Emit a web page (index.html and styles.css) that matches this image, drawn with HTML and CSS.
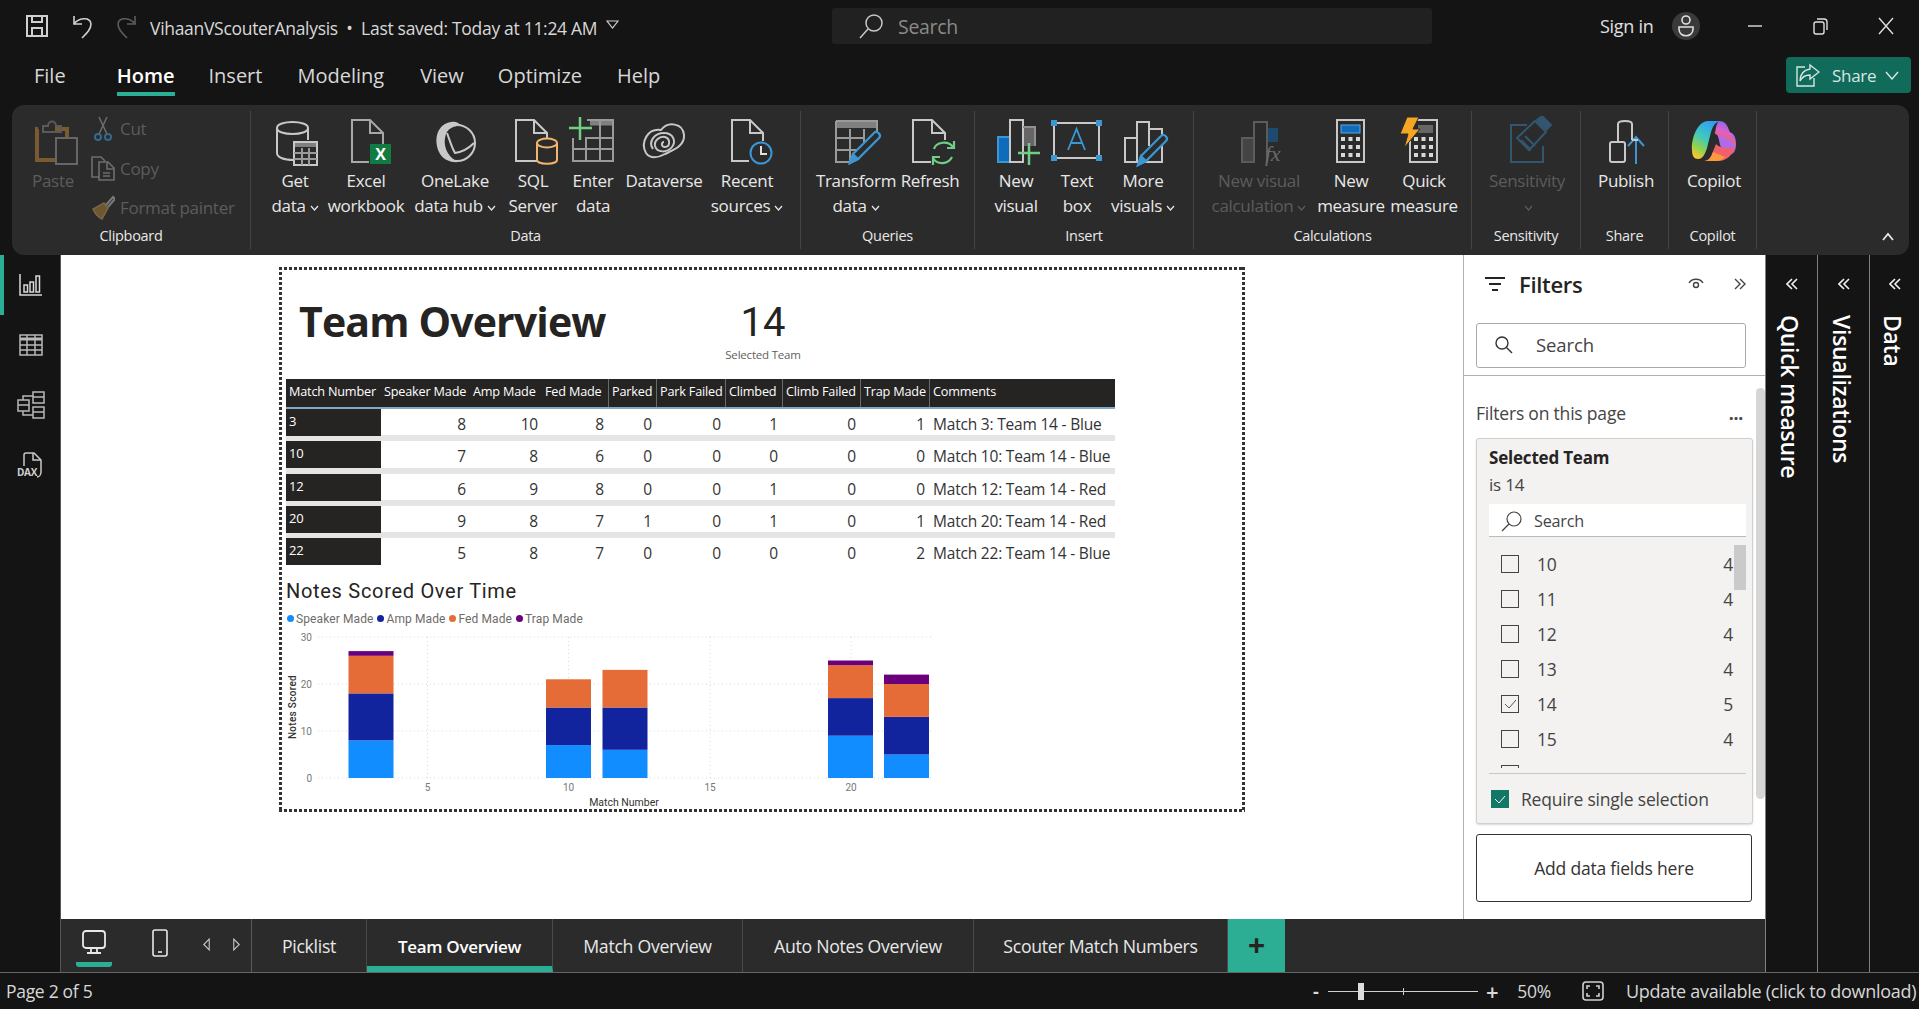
FILE: index.html
```html
<!DOCTYPE html>
<html lang="en">
<head>
    <meta charset="UTF-8">
    <title>VihaanVScouterAnalysis</title>
    <link rel="stylesheet" href="styles.css">
</head>
<body>
<svg class="svg-defs" width="0" height="0">
    <defs>
        <linearGradient id="cop-a" x1="0.7" y1="0" x2="0.2" y2="1">
            <stop offset="0" stop-color="#2f9df4"/><stop offset="0.45" stop-color="#3fc7c0"/><stop offset="0.75" stop-color="#8fd14f"/><stop offset="1" stop-color="#ffc72c"/>
        </linearGradient>
        <linearGradient id="cop-b" x1="0.6" y1="0" x2="0.3" y2="1">
            <stop offset="0" stop-color="#7a6cf0"/><stop offset="0.45" stop-color="#e060c8"/><stop offset="0.8" stop-color="#f8605a"/><stop offset="1" stop-color="#ff9a3c"/>
        </linearGradient>
    </defs>
</svg>

<header class="titlebar">
    <div class="quick-tools">
        <svg width="24" height="24" viewBox="0 0 24 24" fill="none" stroke="#d0d0d0" stroke-width="2"><path d="M2 2H22V22H2Z"/><path d="M7 2V8H17V2"/><path d="M7 22V14H17V22"/></svg>
        <svg width="24" height="26" viewBox="0 0 24 26" fill="none" stroke="#d0d0d0" stroke-width="1.6"><path d="M4 3V11H12"/><path d="M4 11C8 5 20 3 21 11C21 16 17 20 12 25"/></svg>
        <svg width="24" height="26" viewBox="0 0 24 26" fill="none" stroke="#5c5c5c" stroke-width="1.6"><path d="M20 3V11H12"/><path d="M20 11C16 5 4 3 3 11C3 16 7 20 12 25"/></svg>
    </div>
    <div class="doc-title">VihaanVScouterAnalysis &nbsp;•&nbsp; Last saved: Today at 11:24 AM</div>
    <svg class="doc-caret" width="13" height="9" viewBox="0 0 13 9" fill="none" stroke="#d0d0d0" stroke-width="1.2"><path d="M1 1H12L6.5 8Z"/></svg>
    <div class="top-search">
        <svg width="26" height="26" viewBox="0 0 26 26" fill="none" stroke="#c8c8c8" stroke-width="1.5"><circle cx="16" cy="10" r="8"/><path d="M10 16L2 25"/></svg>
        <span>Search</span>
    </div>
    <div class="sign-in">Sign in</div>
    <div class="avatar">
        <svg width="18" height="24" viewBox="0 0 18 24" fill="none" stroke="#e0e0e0" stroke-width="1.6"><circle cx="9" cy="6" r="4"/><path d="M2 13H16V15C16 24 2 24 2 15Z"/></svg>
    </div>
    <div class="win-btns">
        <svg width="16" height="16" viewBox="0 0 16 16" stroke="#e0e0e0" stroke-width="1.4"><path d="M1 8H15"/></svg>
        <svg width="16" height="18" viewBox="0 0 16 18" fill="none" stroke="#e0e0e0" stroke-width="1.4"><rect x="2" y="5" width="10" height="12" rx="2"/><path d="M5 2H12C14 2 15 3 15 5V13"/></svg>
        <svg width="18" height="18" viewBox="0 0 18 18" stroke="#e0e0e0" stroke-width="1.4"><path d="M2 1L16 17M16 1L2 17"/></svg>
    </div>
</header>

<nav class="menu-row">
    <a class="menu-item m-file">File</a>
    <a class="menu-item m-home is-active">Home</a>
    <a class="menu-item m-insert">Insert</a>
    <a class="menu-item m-model">Modeling</a>
    <a class="menu-item m-view">View</a>
    <a class="menu-item m-opt">Optimize</a>
    <a class="menu-item m-help">Help</a>
    <div class="share-btn">
        <svg width="24" height="24" viewBox="0 0 24 24" fill="none" stroke="#d8e6e2" stroke-width="1.4"><path d="M14 2L23 9L14 16V12C9 12 6 14 4 18C4 11 8 7 14 6Z"/><path d="M9 4H1V23H18V15"/></svg>
        <span>Share</span>
        <svg width="14" height="9" viewBox="0 0 14 9" fill="none" stroke="#d8e6e2" stroke-width="1.4"><path d="M1 1L7 8L13 1"/></svg>
    </div>
</nav>

<section class="ribbon">
    <div class="rb-group g-clip">
        <div class="rb-items">
            <div class="rb-item w60 is-off">
                <svg class="rb-icon" width="56" height="52" viewBox="0 0 56 52" fill="none"><path d="M13 13H12V44H30" stroke="#7a5a30" stroke-width="4"/><path d="M30 13H42V22" stroke="#7a5a30" stroke-width="4"/><path d="M18 16V10H23C23 4 31 4 31 10H36V16Z" stroke="#5a5a5a" stroke-width="2"/><rect x="31" y="22" width="21" height="26" stroke="#666" stroke-width="2"/></svg>
                <div class="rb-label">Paste</div>
            </div>
            <div class="clip-col">
                <div class="clip-row">
                    <svg width="24" height="26" viewBox="0 0 24 26" fill="none"><path d="M8 1L16 18M16 1L8 18" stroke="#6e6e6e" stroke-width="1.5"/><circle cx="7" cy="21" r="3" stroke="#35688c" stroke-width="2"/><circle cx="17" cy="21" r="3" stroke="#35688c" stroke-width="2"/></svg>
                    <span>Cut</span>
                </div>
                <div class="clip-row">
                    <svg width="24" height="26" viewBox="0 0 24 26" fill="none" stroke="#6e6e6e" stroke-width="1.6"><path d="M8 22H1V2H10L14 6"/><path d="M8 7H17L23 13V25H8Z"/><path d="M16 7V14H23"/><path d="M12 18H19M12 21H19"/></svg>
                    <span>Copy</span>
                </div>
                <div class="clip-row">
                    <svg width="24" height="26" viewBox="0 0 24 26" fill="none"><path d="M2 14L13 8L17 13L11 24C7 22 4 19 2 14Z" fill="#6e5630" stroke="#7a6a4a" stroke-width="1.4"/><path d="M15 10L22 2L24 4L17 12" stroke="#7a7a7a" stroke-width="2"/></svg>
                    <span>Format painter</span>
                </div>
            </div>
        </div>
        <div class="rb-name">Clipboard</div>
    </div>

    <div class="rb-group g-data">
        <div class="rb-items">
            <div class="rb-item w66">
                <svg class="rb-icon" width="56" height="52" viewBox="0 0 56 52" fill="none" stroke="#c8c8c8" stroke-width="2"><path d="M41 24V12C41 4 10 4 10 12V37C10 41 16 44 27 44"/><path d="M10 12C10 20 41 20 41 12"/><rect x="27" y="26" width="23" height="23" fill="#2b2b2b"/><path d="M28 29H49" stroke="#808080" stroke-width="4"/><path d="M35 32V49M42 32V49M27 37H50M27 43H50" stroke="#9a9a9a"/></svg>
                <div class="rb-label">Get<br>data<svg class="caret" width="9" height="6" viewBox="0 0 9 6"><path d="M1 1L4.5 5L8 1"/></svg></div>
            </div>
            <div class="rb-item w76">
                <svg class="rb-icon" width="56" height="52" viewBox="0 0 56 52" fill="none" stroke="#a8a8a8" stroke-width="2"><path d="M31 46H14V4H32L45 17V28"/><path d="M32 4V17H45"/><rect x="32" y="28" width="21" height="20" fill="#107c41" stroke="none"/><text x="42.5" y="44" class="ic-x">X</text></svg>
                <div class="rb-label">Excel<br>workbook</div>
            </div>
            <div class="rb-item w102">
                <svg class="rb-icon" width="56" height="52" viewBox="0 0 56 52" fill="none" stroke="#c8c8c8" stroke-width="2"><circle cx="30" cy="27" r="18"/><path d="M24 6C11 8 6 22 12 36C15 43 23 47 32 46C21 42 15 30 19 18C21 13 27 9 35 10C31 6 28 5 24 6Z" fill="#c8c8c8" stroke="none"/><path d="M20 17C23 25 25 32 28 37C35 36 42 32 47 27"/></svg>
                <div class="rb-label">OneLake<br>data hub<svg class="caret" width="9" height="6" viewBox="0 0 9 6"><path d="M1 1L4.5 5L8 1"/></svg></div>
            </div>
            <div class="rb-item w54">
                <svg class="rb-icon" width="56" height="52" viewBox="0 0 56 52" fill="none" stroke="#c8c8c8" stroke-width="2"><path d="M32 45H11V4H29L42 17V22"/><path d="M29 4V17H42"/><path d="M32 27V44C32 49 52 49 52 44V27" stroke="#f2b56b"/><ellipse cx="42" cy="27" rx="10" ry="4.5" stroke="#f2b56b"/></svg>
                <div class="rb-label">SQL<br>Server</div>
            </div>
            <div class="rb-item w66">
                <svg class="rb-icon" width="56" height="52" viewBox="0 0 56 52" fill="none" stroke="#9a9a9a" stroke-width="2"><path d="M25 7H48" stroke="#808080" stroke-width="5"/><path d="M48 4V45H8V22M22 4H49"/><path d="M20 22H48M8 33H48M21 22V45M35 4V45"/><path d="M4 12H27M15 1V24" stroke="#6fcf85" stroke-width="2.5"/></svg>
                <div class="rb-label">Enter<br>data</div>
            </div>
            <div class="rb-item w76">
                <svg class="rb-icon" width="56" height="52" viewBox="0 0 56 52" fill="none" stroke="#c8c8c8" stroke-width="2"><path d="M10 37C4 26 12 12 25 14C32 5 47 7 48 19C49 30 37 34 29 38C22 42 14 43 10 37Z"/><path d="M17 33C12 26 18 17 28 17C38 17 40 26 36 31C31 37 21 37 19 30C18 25 23 20 29 21C35 23 34 31 29 31C25 31 25 26 28 26"/></svg>
                <div class="rb-label">Dataverse</div>
            </div>
            <div class="rb-item w90">
                <svg class="rb-icon" width="56" height="52" viewBox="0 0 56 52" fill="none" stroke="#c8c8c8" stroke-width="2"><path d="M30 45H13V4H31L44 17V25"/><path d="M31 4V17H44"/><circle cx="42" cy="37" r="10.5" stroke="#3b97d3"/><path d="M42 30V38H48" stroke="#e0e0e0"/></svg>
                <div class="rb-label">Recent<br>sources<svg class="caret" width="9" height="6" viewBox="0 0 9 6"><path d="M1 1L4.5 5L8 1"/></svg></div>
            </div>
        </div>
        <div class="rb-name">Data</div>
    </div>

    <div class="rb-group g-query">
        <div class="rb-items">
            <div class="rb-item w88">
                <svg class="rb-icon" width="56" height="52" viewBox="0 0 56 52" fill="none" stroke="#9a9a9a" stroke-width="2"><path d="M8 5H49V22M8 5V46H24"/><path d="M9 9H48" stroke="#808080" stroke-width="6"/><path d="M8 22H36M8 34H30M22 13V46M36 13V26"/><path d="M22 47L25 38L46 17C49 14 54 19 51 22L30 43Z" fill="#2b2b2b" stroke="#3b97d3" stroke-width="2.2"/><path d="M22 47L25 38L30 43Z" fill="#3b97d3" stroke="#3b97d3"/></svg>
                <div class="rb-label">Transform<br>data<svg class="caret" width="9" height="6" viewBox="0 0 9 6"><path d="M1 1L4.5 5L8 1"/></svg></div>
            </div>
            <div class="rb-item w60">
                <svg class="rb-icon" width="56" height="52" viewBox="0 0 56 52" fill="none" stroke="#c8c8c8" stroke-width="2"><path d="M29 46H11V4H30L43 17V24"/><path d="M30 4V17H43"/><path d="M32 33C34 26 46 24 51 31M50 41C46 49 35 49 31 42" stroke="#6fcf85" stroke-width="2.2"/><path d="M52 25V32H45M31 49V41H38" stroke="#6fcf85" stroke-width="2.2"/></svg>
                <div class="rb-label">Refresh</div>
            </div>
        </div>
        <div class="rb-name">Queries</div>
    </div>

    <div class="rb-group g-insert">
        <div class="rb-items">
            <div class="rb-item w60">
                <svg class="rb-icon" width="56" height="52" viewBox="0 0 56 52" fill="none" stroke="#c8c8c8" stroke-width="2"><rect x="10" y="21" width="12" height="25" fill="#0f6cbd" stroke="#3b97d3"/><path d="M22 46V4H35V46Z"/><path d="M35 11H47V30" stroke="#909090"/><rect x="36" y="12" width="10" height="18" fill="#666" stroke="none"/><path d="M41 27V49M30 37H52" stroke="#6fcf85" stroke-width="2.5"/></svg>
                <div class="rb-label">New<br>visual</div>
            </div>
            <div class="rb-item w62">
                <svg class="rb-icon" width="56" height="52" viewBox="0 0 56 52" fill="none" stroke="#c8c8c8" stroke-width="2"><rect x="5" y="7" width="45" height="35"/><path d="M19 34L27.500 13L36 34M22 27H33" stroke="#3b97d3" stroke-width="1.8"/><path d="M3 5H7V9H3ZM48 5H52V9H48ZM3 40H7V44H3ZM48 40H52V44H48Z" fill="#3b97d3" stroke="#3b97d3"/></svg>
                <div class="rb-label">Text<br>box</div>
            </div>
            <div class="rb-item w70">
                <svg class="rb-icon" width="56" height="52" viewBox="0 0 56 52" fill="none" stroke="#c8c8c8" stroke-width="2"><path d="M22 22H10V46H47V13H34V6H22V46M34 13V30"/><path d="M23 49L26 40L46 20C49 17 54 22 51 25L31 45Z" fill="#2b2b2b" stroke="#3b97d3" stroke-width="2.2"/><path d="M23 49L26 40L31 45Z" fill="#3b97d3" stroke="#3b97d3"/></svg>
                <div class="rb-label">More<br>visuals<svg class="caret" width="9" height="6" viewBox="0 0 9 6"><path d="M1 1L4.5 5L8 1"/></svg></div>
            </div>
        </div>
        <div class="rb-name">Insert</div>
    </div>

    <div class="rb-group g-calc">
        <div class="rb-items">
            <div class="rb-item w108 is-off">
                <svg class="rb-icon" width="56" height="52" viewBox="0 0 56 52" fill="none" stroke="#5c5c5c" stroke-width="2"><rect x="11" y="22" width="12" height="24" fill="#444"/><path d="M23 46V6H36V46"/><rect x="37" y="12" width="10" height="14" fill="#1d4a6e" stroke="none"/><text x="34" y="45" class="ic-fx">fx</text></svg>
                <div class="rb-label">New visual<br>calculation<svg class="caret" width="9" height="6" viewBox="0 0 9 6"><path d="M1 1L4.5 5L8 1"/></svg></div>
            </div>
            <div class="rb-item w76">
                <svg class="rb-icon" width="56" height="52" viewBox="0 0 56 52" fill="none" stroke="#c8c8c8" stroke-width="2"><rect x="14" y="4" width="27" height="42"/><rect x="18" y="9" width="19" height="8" fill="#0f6cbd" stroke="#5aa8e0" stroke-width="1"/><path class="keys" d="M18 21h4v4h-4zM25.500 21h4v4h-4zM33 21h4v4h-4zM18 29h4v4h-4zM25.500 29h4v4h-4zM33 29h4v4h-4zM18 37h4v4h-4zM25.500 37h4v4h-4zM33 37h4v4h-4z" fill="#d8d8d8" stroke="none"/></svg>
                <div class="rb-label">New<br>measure</div>
            </div>
            <div class="rb-item w70">
                <svg class="rb-icon" width="56" height="52" viewBox="0 0 56 52" fill="none" stroke="#c8c8c8" stroke-width="2"><rect x="14" y="4" width="27" height="42"/><rect x="22" y="9" width="15" height="8" fill="#666" stroke="none"/><path class="keys" d="M18 21h4v4h-4zM25.500 21h4v4h-4zM33 21h4v4h-4zM18 29h4v4h-4zM25.500 29h4v4h-4zM33 29h4v4h-4zM18 37h4v4h-4zM25.500 37h4v4h-4zM33 37h4v4h-4z" fill="#d8d8d8" stroke="none"/><path d="M11 1H23L17 13H24L8 32L12 18H4Z" fill="#f5a623" stroke="#2b2b2b" stroke-width="1"/></svg>
                <div class="rb-label">Quick<br>measure</div>
            </div>
        </div>
        <div class="rb-name">Calculations</div>
    </div>

    <div class="rb-group g-sens">
        <div class="rb-items">
            <div class="rb-item w88 is-off">
                <svg class="rb-icon" width="56" height="52" viewBox="0 0 56 52" fill="none" stroke="#33566f" stroke-width="2"><path d="M35 46H12V9H28M12 46H44V30"/><path d="M18 22L36 5L47 16L30 34Z" fill="#2b2b2b"/><path d="M38 4L43 0L52 9L47 14ZM22 24L32 34M26 20L36 30" fill="#33566f"/></svg>
                <div class="rb-label">Sensitivity<br><svg class="caret" width="9" height="6" viewBox="0 0 9 6"><path d="M1 1L4.5 5L8 1"/></svg></div>
            </div>
        </div>
        <div class="rb-name">Sensitivity</div>
    </div>

    <div class="rb-group g-share">
        <div class="rb-items">
            <div class="rb-item w68">
                <svg class="rb-icon" width="56" height="52" viewBox="0 0 56 52" fill="none" stroke="#c8c8c8" stroke-width="2"><path d="M20 26V8C20 4 34 4 34 8V24"/><path d="M25 46H14C12 46 12 44 12 44V28C12 26 14 26 14 26H25C27 26 27 28 27 28V44C27 46 25 46 25 46Z"/><path d="M38 48V22" stroke="#3b97d3"/><path d="M30 30L38 21L46 30" stroke="#3b97d3"/><path d="M34 24H40" stroke="#c8c8c8"/></svg>
                <div class="rb-label">Publish</div>
            </div>
        </div>
        <div class="rb-name">Share</div>
    </div>

    <div class="rb-group g-copilot">
        <div class="rb-items">
            <div class="rb-item w68">
                <svg class="rb-icon" width="56" height="52" viewBox="0 0 56 52"><path d="M34 5H22C12 5 5 22 6 34C6 40 8 43 12 43C17 43 19 38 21 32L25 16C27 9 30 6 34 5Z" fill="url(#cop-a)"/><path d="M28 16H42C48 16 50 22 50 28C50 36 46 40 42 38C36 36 34 30 33 24C32 20 31 17 28 16Z" fill="#b26be8"/><path d="M33 5C38 5 41 8 43 14C45 20 50 26 50 30C46 24 36 20 29 18C30 10 31 7 33 5Z" fill="url(#cop-b)"/><path d="M18 45H32C42 45 47 38 49 30C44 34 34 32 30 28L26 38C24 43 21 45 18 45Z" fill="#f0606a"/><path d="M18 45H30C34 45 37 43 39 41L27 36C25 42 22 45 18 45Z" fill="#ff9a3c"/></svg>
                <div class="rb-label">Copilot</div>
            </div>
        </div>
        <div class="rb-name">Copilot</div>
    </div>

    <svg class="rb-collapse" width="14" height="9" viewBox="0 0 14 9" fill="none" stroke="#e8e8e8" stroke-width="1.8"><path d="M2 8L7 2L12 8"/></svg>
</section>

<main class="workspace">
    <aside class="rail">
        <div class="rail-item is-current">
            <svg width="24" height="24" viewBox="0 0 24 24" fill="none" stroke="#d8d8d8" stroke-width="1.5"><path d="M1 1V22H23"/><rect x="5" y="12" width="3.500" height="7"/><rect x="11" y="9" width="3.500" height="10"/><rect x="17" y="3" width="3.500" height="16"/></svg>
        </div>
        <div class="rail-item">
            <svg width="24" height="22" viewBox="0 0 24 22" fill="none" stroke="#b8b8b8" stroke-width="1.500"><rect x="1" y="1" width="22" height="20"/><path d="M1 5H23" stroke-width="3"/><path d="M1 11H23M1 16H23M8 1V21M16 1V21"/></svg>
        </div>
        <div class="rail-item">
            <svg width="28" height="28" viewBox="0 0 28 28" fill="none" stroke="#b8b8b8" stroke-width="1.500"><rect x="1" y="9" width="11" height="11"/><path d="M1 14H12"/><rect x="16" y="1" width="11" height="11"/><path d="M16 6H27"/><rect x="16" y="16" width="11" height="11"/><path d="M16 21H27"/><path d="M6 9V5H16M6 20V24H16"/></svg>
        </div>
        <div class="rail-item">
            <svg width="28" height="26" viewBox="0 0 28 26" fill="none" stroke="#c8c8c8" stroke-width="1.500"><path d="M7 14V3C7 2 8 1 9 1H17L24 8V20C24 23 22 25 20 25"/><path d="M16 1V8H24"/><text x="0" y="24" class="ic-dax">DAX</text></svg>
        </div>
    </aside>

    <div class="center">
        <div class="canvas-row">
            <div class="canvas">
                <div class="report-page">
                    <div class="page-top">
                        <h1 class="page-title">Team Overview</h1>
                        <div class="team-card">
                            <div class="team-num">14</div>
                            <div class="team-cap">Selected Team</div>
                        </div>
                    </div>

                    <div class="match-table">
                        <div class="tbl-head">
                            <div class="th">Match Number</div>
                            <div class="th">Speaker Made</div>
                            <div class="th">Amp Made</div>
                            <div class="th">Fed Made</div>
                            <div class="th th-line">Parked</div>
                            <div class="th th-line">Park Failed</div>
                            <div class="th th-line">Climbed</div>
                            <div class="th th-line">Climb Failed</div>
                            <div class="th th-line">Trap Made</div>
                            <div class="th th-line">Comments</div>
                        </div>
                        <div class="tbl-row">
                            <div class="td-key">3</div><div class="td">8</div><div class="td">10</div><div class="td">8</div><div class="td">0</div><div class="td">0</div><div class="td">1</div><div class="td">0</div><div class="td">1</div><div class="td td-text">Match 3: Team 14 - Blue</div>
                        </div>
                        <div class="tbl-row">
                            <div class="td-key">10</div><div class="td">7</div><div class="td">8</div><div class="td">6</div><div class="td">0</div><div class="td">0</div><div class="td">0</div><div class="td">0</div><div class="td">0</div><div class="td td-text">Match 10: Team 14 - Blue</div>
                        </div>
                        <div class="tbl-row">
                            <div class="td-key">12</div><div class="td">6</div><div class="td">9</div><div class="td">8</div><div class="td">0</div><div class="td">0</div><div class="td">1</div><div class="td">0</div><div class="td">0</div><div class="td td-text">Match 12: Team 14 - Red</div>
                        </div>
                        <div class="tbl-row">
                            <div class="td-key">20</div><div class="td">9</div><div class="td">8</div><div class="td">7</div><div class="td">1</div><div class="td">0</div><div class="td">1</div><div class="td">0</div><div class="td">1</div><div class="td td-text">Match 20: Team 14 - Red</div>
                        </div>
                        <div class="tbl-row tbl-last">
                            <div class="td-key">22</div><div class="td">5</div><div class="td">8</div><div class="td">7</div><div class="td">0</div><div class="td">0</div><div class="td">0</div><div class="td">0</div><div class="td">2</div><div class="td td-text">Match 22: Team 14 - Blue</div>
                        </div>
                    </div>

                    <h2 class="chart-title">Notes Scored Over Time</h2>
                    <div class="legend">
                        <span class="lg"><i class="dot d-speaker"></i>Speaker Made</span>
                        <span class="lg"><i class="dot d-amp"></i>Amp Made</span>
                        <span class="lg"><i class="dot d-fed"></i>Fed Made</span>
                        <span class="lg"><i class="dot d-trap"></i>Trap Made</span>
                    </div>

                    <svg class="chart" width="700" height="180" viewBox="286 628 700 180">
                        <g class="grid">
                            <path d="M318 637H931M318 684H931M318 731H931M318 778H931"/>
                            <path d="M427.500 637V778M568.500 637V778M710 637V778M851 637V778"/>
                        </g>
                        <g class="axis-y">
                            <text x="312" y="641">30</text>
                            <text x="312" y="688">20</text>
                            <text x="312" y="735">10</text>
                            <text x="312" y="782">0</text>
                        </g>
                        <g class="axis-x">
                            <text x="427.500" y="791">5</text>
                            <text x="568.500" y="791">10</text>
                            <text x="710" y="791">15</text>
                            <text x="851" y="791">20</text>
                            <text x="624" y="806" class="axis-name">Match Number</text>
                        </g>
                        <text class="axis-name-y" transform="translate(296 707) rotate(-90)">Notes Scored</text>

                        <!-- match 3 -->
                        <rect class="b-speaker" x="348.500" y="740.400" width="45" height="37.600"/>
                        <rect class="b-amp" x="348.500" y="693.400" width="45" height="47"/>
                        <rect class="b-fed" x="348.500" y="655.800" width="45" height="37.600"/>
                        <rect class="b-trap" x="348.500" y="651.100" width="45" height="4.700"/>
                        <!-- match 10 -->
                        <rect class="b-speaker" x="546" y="745.100" width="45" height="32.900"/>
                        <rect class="b-amp" x="546" y="707.500" width="45" height="37.600"/>
                        <rect class="b-fed" x="546" y="679.300" width="45" height="28.200"/>
                        <!-- match 12 -->
                        <rect class="b-speaker" x="602.500" y="749.800" width="45" height="28.200"/>
                        <rect class="b-amp" x="602.500" y="707.500" width="45" height="42.300"/>
                        <rect class="b-fed" x="602.500" y="669.900" width="45" height="37.600"/>
                        <!-- match 20 -->
                        <rect class="b-speaker" x="828" y="735.700" width="45" height="42.300"/>
                        <rect class="b-amp" x="828" y="698.100" width="45" height="37.600"/>
                        <rect class="b-fed" x="828" y="665.200" width="45" height="32.900"/>
                        <rect class="b-trap" x="828" y="660.500" width="45" height="4.700"/>
                        <!-- match 22 -->
                        <rect class="b-speaker" x="884" y="754.500" width="45" height="23.500"/>
                        <rect class="b-amp" x="884" y="716.900" width="45" height="37.600"/>
                        <rect class="b-fed" x="884" y="684" width="45" height="32.900"/>
                        <rect class="b-trap" x="884" y="674.600" width="45" height="9.400"/>
                    </svg>
                </div>
            </div>

            <aside class="filters">
                <div class="f-head">
                    <svg width="20" height="16" viewBox="0 0 20 16" stroke="#252423" stroke-width="2"><path d="M0 2H20M4 8H16M7 14H13"/></svg>
                    <span class="f-title">Filters</span>
                    <svg class="f-eye" width="16" height="12" viewBox="0 0 16 12" fill="none" stroke="#444" stroke-width="1.400"><path d="M1 5C4 0 12 0 15 5"/><circle cx="8" cy="7" r="2.500"/></svg>
                    <svg class="f-more" width="12" height="12" viewBox="0 0 12 12" fill="none" stroke="#444" stroke-width="1.400"><path d="M1 1L6 6L1 11M6 1L11 6L6 11"/></svg>
                </div>
                <div class="f-search">
                    <svg width="18" height="18" viewBox="0 0 18 18" fill="none" stroke="#333" stroke-width="1.400"><circle cx="7" cy="7" r="6"/><path d="M11.500 11.500L17 17"/></svg>
                    <span>Search</span>
                </div>
                <div class="f-body">
                    <div class="f-scroll"></div>
                    <div class="f-section">
                        <span>Filters on this page</span>
                        <span class="f-dots">...</span>
                    </div>
                    <div class="f-card">
                        <div class="f-name">Selected Team</div>
                        <div class="f-is">is 14</div>
                        <div class="f-find">
                            <svg width="21" height="21" viewBox="0 0 21 21" fill="none" stroke="#444" stroke-width="1.200"><circle cx="13" cy="8" r="7"/><path d="M8 13L1 20"/></svg>
                            <span>Search</span>
                        </div>
                        <div class="f-list">
                            <div class="f-list-bar"></div>
                            <div class="f-row"><i class="cb"></i><span>10</span><b>4</b></div>
                            <div class="f-row"><i class="cb"></i><span>11</span><b>4</b></div>
                            <div class="f-row"><i class="cb"></i><span>12</span><b>4</b></div>
                            <div class="f-row"><i class="cb"></i><span>13</span><b>4</b></div>
                            <div class="f-row"><i class="cb"><svg width="16" height="16" viewBox="0 0 16 16" fill="none" stroke="#555" stroke-width="1"><path d="M3 8L7 12L14 4"/></svg></i><span>14</span><b>5</b></div>
                            <div class="f-row"><i class="cb"></i><span>15</span><b>4</b></div>
                            <div class="f-row"><i class="cb"></i><span>16</span><b>5</b></div>
                        </div>
                        <div class="f-single">
                            <i class="cb-on"><svg width="18" height="18" viewBox="0 0 18 18" fill="none" stroke="#fff" stroke-width="1"><path d="M4 9L8 13L14 6"/></svg></i>
                            <span>Require single selection</span>
                        </div>
                    </div>
                    <div class="f-add">Add data fields here</div>
                </div>
            </aside>
        </div>

        <div class="tabbar">
            <div class="view-btns">
                <div class="view-desktop">
                    <svg width="24" height="24" viewBox="0 0 24 24" fill="none" stroke="#e8e8e8" stroke-width="1.800"><rect x="1" y="1" width="22" height="17" rx="3"/><path d="M9 19V22M15 19V22M5 23H19"/></svg>
                </div>
                <svg class="view-phone" width="16" height="28" viewBox="0 0 16 28" fill="none" stroke="#e8e8e8" stroke-width="1.600"><rect x="1" y="1" width="14" height="26" rx="2"/><path d="M6 23H10"/></svg>
                <svg class="nav-arrow nav-first" width="7" height="13" viewBox="0 0 9 16" fill="none" stroke="#c8c8c8" stroke-width="1.400"><path d="M8 1V15L1 8Z"/></svg>
                <svg class="nav-arrow" width="7" height="13" viewBox="0 0 9 16" fill="none" stroke="#c8c8c8" stroke-width="1.400"><path d="M1 1V15L8 8Z"/></svg>
            </div>
            <div class="tabs">
                <div class="tab">Picklist</div>
                <div class="tab is-active">Team Overview</div>
                <div class="tab">Match Overview</div>
                <div class="tab">Auto Notes Overview</div>
                <div class="tab">Scouter Match Numbers</div>
                <div class="tab-add">+</div>
            </div>
        </div>
    </div>

    <aside class="panes">
        <div class="pane">
            <svg width="12" height="12" viewBox="0 0 12 12" fill="none" stroke="#f0f0f0" stroke-width="1.600"><path d="M6 1L1 6L6 11M11 1L6 6L11 11"/></svg>
            <span class="pane-name">Quick measure</span>
        </div>
        <div class="pane">
            <svg width="12" height="12" viewBox="0 0 12 12" fill="none" stroke="#f0f0f0" stroke-width="1.600"><path d="M6 1L1 6L6 11M11 1L6 6L11 11"/></svg>
            <span class="pane-name">Visualizations</span>
        </div>
        <div class="pane">
            <svg width="12" height="12" viewBox="0 0 12 12" fill="none" stroke="#f0f0f0" stroke-width="1.600"><path d="M6 1L1 6L6 11M11 1L6 6L11 11"/></svg>
            <span class="pane-name">Data</span>
        </div>
    </aside>
</main>

<footer class="statusbar">
    <span class="page-count">Page 2 of 5</span>
    <div class="zoom">
        <span class="zoom-minus">-</span>
        <div class="zoom-track"><i class="zoom-thumb"></i><i class="zoom-tick"></i></div>
        <span class="zoom-plus">+</span>
        <span class="zoom-val">50%</span>
    </div>
    <svg class="fit-icon" width="22" height="22" viewBox="0 0 22 22" fill="none" stroke="#d0d0d0" stroke-width="1.600"><rect x="1" y="2" width="20" height="18" rx="3"/><path d="M5 9V6H8M14 6H17V9M5 13V16H8M14 16H17V13"/></svg>
    <span class="update">Update available (click to download)</span>
</footer>
</body>
</html>
```

FILE: styles.css
```css
* {
    box-sizing: border-box;
}

html, body {
    margin: 0;
    height: 100%;
}

body {
    width: 1919px;
    height: 1009px;
    overflow: hidden;
    background: #141414;
    color: #e8e8e8;
    font-family: "Open Sans", "Noto Sans", sans-serif;
    letter-spacing: -0.3px;
}

.svg-defs {
    display: block;
    height: 0;
}

/* title bar */
.titlebar {
    height: 50px;
    display: flex;
    align-items: center;
    padding-top: 2px;
}

.quick-tools {
    display: flex;
    align-items: center;
    gap: 21px;
    margin-left: 25px;
    width: 125px;
}

.doc-title {
    font-size: 17.5px;
    color: #d8d8d8;
    width: 456px;
    padding-top: 3px;
    white-space: nowrap;
}

.doc-caret {
    margin-top: -4px;
}

.top-search {
    margin-left: 213px;
    width: 600px;
    height: 36px;
    background: #212121;
    border-radius: 3px;
    display: flex;
    align-items: center;
    gap: 14px;
    padding-left: 26px;
    color: #8a8a8a;
    font-size: 19.5px;
}

.sign-in {
    margin-left: 168px;
    width: 72px;
    font-size: 18px;
    color: #e0e0e0;
}

.avatar {
    width: 28px;
    height: 28px;
    border-radius: 50%;
    background: #3a3a3a;
    display: flex;
    align-items: center;
    justify-content: center;
}

.win-btns {
    display: flex;
    align-items: center;
    gap: 49px;
    margin-left: 47px;
}

/* menu row */
.menu-row {
    height: 55px;
    display: flex;
    align-items: flex-start;
    font-size: 20px;
    letter-spacing: 0;
}

.menu-item {
    color: #d8d8d8;
    height: 46px;
    padding-top: 14px;
    line-height: 24px;
}

.m-file { margin-left: 34px; }
.m-home { margin-left: 51px; }
.m-insert { margin-left: 34px; }
.m-model { margin-left: 35px; }
.m-view { margin-left: 36px; }
.m-opt { margin-left: 34px; }
.m-help { margin-left: 35px; }

.menu-item.is-active {
    color: #fff;
    font-weight: 600;
    border-bottom: 4px solid #2bae94;
}

.share-btn {
    margin-left: auto;
    margin-right: 8px;
    margin-top: 7px;
    width: 125px;
    height: 36px;
    background: #106b5b;
    border-radius: 4px;
    display: flex;
    align-items: center;
    gap: 12px;
    padding-left: 10px;
    color: #d8e6e2;
    font-size: 17px;
    letter-spacing: -0.3px;
}

.share-btn span {
    margin-right: -3px;
}

/* ribbon */
.ribbon {
    height: 150px;
    margin: 0 10px 0 12px;
    background: #2b2b2b;
    border-radius: 12px;
    display: flex;
    padding-top: 6px;
    position: relative;
    font-size: 17px;
}

.rb-group {
    height: 138px;
    border-right: 1px solid #444;
    display: flex;
    flex-direction: column;
}

.g-clip { width: 239px; }
.g-data { width: 550px; }
.g-query { width: 174px; }
.g-insert { width: 219px; }
.g-calc { width: 278px; }
.g-sens { width: 109px; }
.g-share { width: 88px; }
.g-copilot { width: 88px; }

.rb-items {
    height: 114px;
    display: flex;
    padding-left: 11px;
}

.rb-item {
    display: flex;
    flex-direction: column;
    align-items: center;
    text-align: center;
    flex-shrink: 0;
}

.w54 { width: 54px; }
.w60 { width: 60px; }
.w62 { width: 62px; }
.w66 { width: 66px; }
.w68 { width: 68px; }
.w70 { width: 70px; }
.w76 { width: 76px; }
.w88 { width: 88px; }
.w90 { width: 90px; }
.w102 { width: 102px; }
.w108 { width: 108px; }

.rb-icon {
    display: block;
    margin-top: 5px;
    flex-shrink: 0;
}

.rb-label {
    line-height: 25px;
    color: #e8e8e8;
    white-space: nowrap;
}

.is-off .rb-label {
    color: #5c5c5c;
}

.caret {
    fill: none;
    stroke: currentColor;
    stroke-width: 1.200;
    margin-left: 4px;
    vertical-align: 1px;
}

.rb-name {
    text-align: center;
    font-size: 14.5px;
    line-height: 22px;
    color: #e8e8e8;
}

.rb-collapse {
    position: absolute;
    right: 14px;
    top: 127px;
}

.clip-col {
    margin-left: 8px;
    margin-top: -2px;
    display: flex;
    flex-direction: column;
}

.clip-row {
    height: 39.500px;
    flex-shrink: 0;
    display: flex;
    align-items: center;
    gap: 5px;
    color: #5c5c5c;
    white-space: nowrap;
}

.ic-x {
    font-family: "Open Sans", sans-serif;
    font-size: 16px;
    font-weight: 700;
    fill: #fff;
    stroke: none;
    text-anchor: middle;
}

.ic-fx {
    font-family: "Liberation Serif", serif;
    font-style: italic;
    font-size: 22px;
    fill: #6a6a6a;
    stroke: none;
}

.ic-dax {
    font-family: "Open Sans", sans-serif;
    font-size: 10px;
    font-weight: 700;
    fill: #d0d0d0;
    stroke: none;
}

/* main area */
.workspace {
    height: 717px;
    display: flex;
}

.rail {
    width: 61px;
    border-right: 1px solid #555;
    flex-shrink: 0;
}

.rail-item {
    height: 60px;
    display: flex;
    align-items: center;
    justify-content: center;
    border-left: 4px solid transparent;
    padding-right: 2px;
}

.rail-item.is-current {
    border-left-color: #2bae94;
}

.center {
    width: 1704px;
    display: flex;
    flex-direction: column;
}

.canvas-row {
    height: 664px;
    display: flex;
}

.canvas {
    width: 1402px;
    background: #fff;
    padding: 12px 0 0 218px;
}

/* report page */
.report-page {
    width: 966px;
    height: 545px;
    padding: 0 0 0 7px;
    color: #252423;
    background:
        repeating-linear-gradient(to right, #333 0 3px, transparent 3px 5px) top left / 100% 3px no-repeat,
        repeating-linear-gradient(to right, #333 0 3px, transparent 3px 5px) bottom left / 100% 3px no-repeat,
        repeating-linear-gradient(to bottom, #333 0 3px, transparent 3px 5px) top left / 3px 100% no-repeat,
        repeating-linear-gradient(to bottom, #333 0 3px, transparent 3px 5px) top right / 3px 100% no-repeat;
    letter-spacing: normal;
}

.page-top {
    height: 112px;
    display: flex;
}

.page-title {
    width: 400px;
    margin: 0;
    padding: 26px 0 0 13px;
    font-size: 41px;
    line-height: 56px;
    font-weight: 700;
    color: #252423;
    letter-spacing: -0.85px;
}

.team-card {
    width: 154px;
    padding-top: 31.500px;
    text-align: center;
}

.team-num {
    font-family: Roboto, sans-serif;
    font-size: 40px;
    line-height: 47px;
    color: #252423;
}

.team-cap {
    font-size: 11.5px;
    line-height: 18px;
    color: #605e5c;
    letter-spacing: -0.2px;
}

/* table */
.match-table {
    width: 829px;
}

.tbl-head,
.tbl-row {
    display: grid;
    grid-template-columns: 95px 89px 72px 66px 48px 69px 57px 78px 69px 186px;
}

.tbl-head {
    height: 30px;
    background: #252423;
    border-bottom: 2px solid #7fa8c9;
    color: #fff;
    font-size: 12.7px;
    letter-spacing: -0.2px;
}

.th {
    padding: 3px 0 0 3px;
    line-height: 18px;
    white-space: nowrap;
    overflow: hidden;
}

.th-line {
    border-left: 1px solid #6a6a6a;
}

.tbl-row {
    height: 32.300px;
    border-bottom: 6px solid #e5e5e5;
    font-size: 15.5px;
    letter-spacing: -0.2px;
    color: #333;
}

.tbl-last {
    height: 26px;
    border-bottom: 0;
}

.td-key {
    background: #252423;
    color: #fff;
    font-size: 13px;
    padding: 2px 0 0 3px;
    line-height: 20px;
}

.td {
    text-align: right;
    padding: 3px 4px 0 0;
    line-height: 24px;
}

.td-text {
    text-align: left;
    padding-left: 4px;
    white-space: nowrap;
}

/* chart */
.chart-title {
    margin: 0;
    padding-top: 14px;
    height: 45px;
    font-family: Roboto, sans-serif;
    font-size: 20px;
    line-height: 26px;
    font-weight: 400;
    letter-spacing: 0.7px;
    color: #252423;
}

.legend {
    display: flex;
    gap: 4px;
    height: 19px;
    align-items: center;
    font-family: Roboto, sans-serif;
    font-size: 12px;
    color: #6e6c6a;
    letter-spacing: 0.1px;
    padding-left: 1px;
}

.lg {
    display: flex;
    align-items: center;
    gap: 2px;
}

.dot {
    width: 7px;
    height: 7px;
    border-radius: 50%;
}

.d-speaker { background: #118dff; }
.d-amp { background: #12239e; }
.d-fed { background: #e66c37; }
.d-trap { background: #6b007b; }

.chart {
    display: block;
}

.chart .grid path {
    stroke: #d9d9d9;
    stroke-width: 1;
    stroke-dasharray: 1 3;
    fill: none;
}

.chart text {
    font-family: Roboto, sans-serif;
    font-size: 10px;
    fill: #777;
}

.axis-y text {
    text-anchor: end;
}

.axis-x text {
    text-anchor: middle;
}

.chart .axis-name {
    font-size: 10.5px;
    fill: #333;
}

.chart .axis-name-y {
    font-size: 10px;
    font-weight: 500;
    fill: #333;
    text-anchor: middle;
    letter-spacing: 0.3px;
}

.b-speaker { fill: #118dff; }
.b-amp { fill: #12239e; }
.b-fed { fill: #e66c37; }
.b-trap { fill: #6b007b; }

/* filter pane */
.filters {
    width: 302px;
    background: #fff;
    border-left: 1px solid #b0b0b0;
    color: #252423;
    letter-spacing: normal;
    display: flex;
    flex-direction: column;
}

.f-head {
    height: 68px;
    display: flex;
    align-items: center;
    padding-left: 21px;
    flex-shrink: 0;
    padding-bottom: 10px;
}

.f-title {
    font-size: 22px;
    font-weight: 600;
    margin-left: 14px;
    letter-spacing: -0.3px;
}

.f-eye {
    margin-left: auto;
}

.f-more {
    margin-left: 30px;
    margin-right: 19px;
}

.f-search {
    height: 45px;
    width: 270px;
    margin-left: 12px;
    padding: 0 0 2px 18px;
    border: 1px solid #aaa;
    border-radius: 3px;
    display: flex;
    align-items: center;
    gap: 23px;
    font-size: 18.5px;
    color: #444;
    flex-shrink: 0;
    letter-spacing: -0.1px;
}

.f-body {
    margin-top: 7px;
    border-top: 1px solid #b0b0b0;
    flex: 1;
    position: relative;
    padding-left: 12px;
}

.f-scroll {
    position: absolute;
    right: 0;
    top: 12px;
    width: 9px;
    height: 411px;
    background: #d6d6d6;
    border-radius: 5px;
}

.f-section {
    width: 270px;
    height: 62px;
    display: flex;
    justify-content: space-between;
    padding-top: 24px;
    font-size: 17.500px;
    line-height: 26px;
    color: #444;
    letter-spacing: -0.2px;
}

.f-dots {
    margin-right: 3px;
    font-weight: 700;
}

.f-card {
    width: 277px;
    height: 386px;
    background: #f3f2f1;
    border: 1px solid #d0d0d0;
    border-radius: 3px;
    box-shadow: 0 1px 2px rgba(0, 0, 0, 0.15);
    padding: 0 6px 0 12px;
    letter-spacing: -0.2px;
}

.f-name {
    margin-top: 6px;
    font-size: 17px;
    font-weight: 700;
    line-height: 26px;
}

.f-is {
    margin-top: 1px;
    font-size: 17px;
    line-height: 26px;
    color: #444;
}

.f-find {
    margin-top: 6px;
    height: 33px;
    background: #fff;
    border-bottom: 1px solid #bbb;
    display: flex;
    align-items: center;
    gap: 12px;
    padding: 2px 0 0 12px;
    font-size: 16.200px;
    color: #444;
}

.f-list {
    height: 231px;
    padding-top: 9px;
    overflow: hidden;
    position: relative;
}

.f-list-bar {
    position: absolute;
    right: 0;
    top: 8px;
    width: 12px;
    height: 45px;
    background: #cacaca;
}

.f-row {
    height: 35px;
    display: flex;
    align-items: center;
    padding-left: 12px;
    font-size: 17.5px;
    color: #444;
}

.f-row span {
    margin-left: 18px;
}

.f-row b {
    margin-left: auto;
    margin-right: 13px;
    font-weight: 400;
}

.cb {
    width: 18px;
    height: 18px;
    border: 1px solid #444;
    display: block;
}

.cb svg {
    display: block;
}

.f-single {
    border-top: 1px solid #c8c8c8;
    height: 50px;
    margin-top: 5px;
    display: flex;
    align-items: center;
    gap: 12px;
    padding-left: 2px;
    font-size: 17.500px;
    color: #444;
}

.cb-on {
    width: 18px;
    height: 18px;
    background: #117865;
    display: block;
}

.cb-on svg {
    display: block;
}

.f-add {
    margin-top: 10px;
    width: 276px;
    height: 68px;
    border: 1px solid #333;
    border-radius: 3px;
    display: flex;
    align-items: center;
    justify-content: center;
    font-size: 17.500px;
    color: #333;
    letter-spacing: -0.2px;
}

/* page tabs */
.tabbar {
    height: 53px;
    background: #2b2b2b;
    display: flex;
}

.view-btns {
    width: 191px;
    display: flex;
    align-items: center;
    flex-shrink: 0;
    border-right: 1px solid #5a5a5a;
}

.view-desktop {
    margin-left: 15px;
    width: 36px;
    height: 47px;
    display: flex;
    align-items: center;
    justify-content: center;
    border-bottom: 5px solid #2bae94;
    border-radius: 0 0 3px 3px;
    margin-top: -5px;
    padding-top: 2px;
}

.view-phone {
    margin-left: 40px;
    margin-top: -6px;
}

.nav-arrow {
    margin-left: 23px;
    margin-top: -3px;
}

.nav-first {
    margin-left: 35px;
}

.tabs {
    display: grid;
    grid-template-columns: 115px 186px 190px 231px 254px 57px;
    font-size: 17.700px;
    color: #e8e8e8;
}

.tab {
    display: flex;
    align-items: center;
    justify-content: center;
    border-right: 1px solid #4a4a4a;
    padding-top: 1px;
}

.tab.is-active {
    font-size: 17px;
    font-weight: 600;
    color: #fff;
    border-bottom: 6px solid #2bae94;
    padding-top: 7px;
}

.tab-add {
    background: #2bae94;
    color: #252423;
    font-size: 30px;
    font-weight: 700;
    display: flex;
    align-items: center;
    justify-content: center;
    padding-bottom: 3px;
}

/* collapsed panes */
.panes {
    display: flex;
    flex: 1;
}

.pane {
    width: 52px;
    border-left: 1px solid #808080;
    display: flex;
    flex-direction: column;
    align-items: center;
    padding-top: 23px;
}

.pane:last-child {
    width: 50px;
}

.pane-name {
    writing-mode: vertical-rl;
    margin-top: 25px;
    margin-right: 3px;
    font-size: 23px;
    font-weight: 600;
    color: #fff;
    letter-spacing: -0.3px;
}

/* status bar */
.statusbar {
    height: 35px;
    border-top: 1px solid #666;
    display: flex;
    align-items: center;
    padding: 2px 0 0 6px;
    font-size: 17.500px;
    color: #d8d8d8;
}

.page-count {
    width: 1307px;
}

.zoom {
    display: flex;
    align-items: center;
    width: 269px;
}

.zoom-minus {
    width: 15px;
    font-size: 18px;
    font-weight: 700;
}

.zoom-track {
    width: 150px;
    height: 1px;
    background: #d0d0d0;
    position: relative;
}

.zoom-thumb {
    position: absolute;
    left: 30px;
    top: -8px;
    width: 6px;
    height: 17px;
    background: #ddd;
}

.zoom-tick {
    position: absolute;
    left: 75px;
    top: -3px;
    width: 1px;
    height: 7px;
    background: #d0d0d0;
}

.zoom-plus {
    margin-left: 8px;
    font-size: 22px;
    font-weight: 600;
    line-height: 20px;
}

.zoom-val {
    margin-left: 19px;
}

.fit-icon {
    margin-right: 22px;
}

.update {
    font-size: 18px;
    white-space: nowrap;
}
```
